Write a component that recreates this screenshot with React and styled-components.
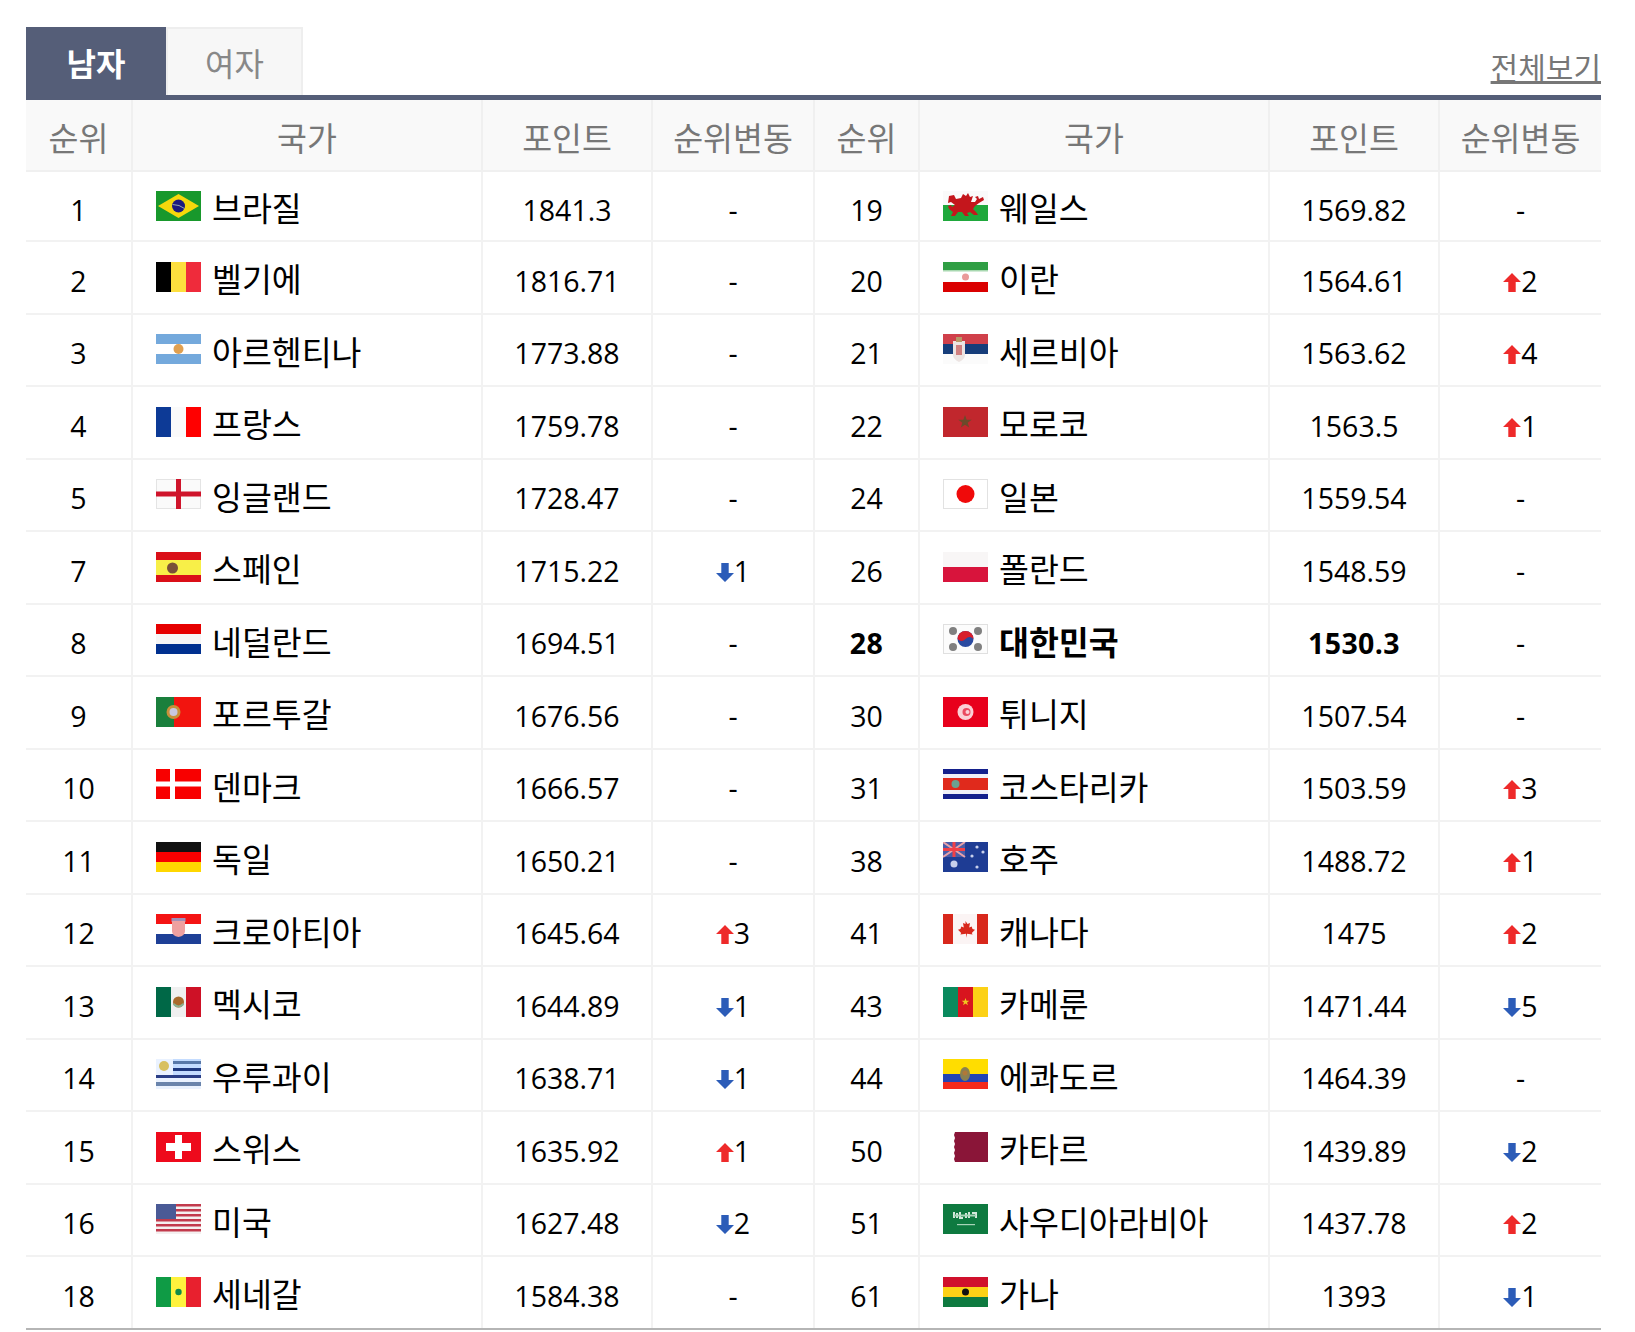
import React from 'react';
import styled, { createGlobalStyle } from 'styled-components';

const GlobalStyle = createGlobalStyle`
  html, body {
    margin: 0;
    padding: 0;
    background: #fff;
  }
  body {
    font-family: "Noto Sans CJK KR", "Noto Sans", sans-serif;
  }
`;

const COLUMNS = '107px 350px 170px 162px 105px 350px 170px 161px';

//styled-components
const Page = styled.div`
  width: 1575px;
  margin: 0 0 0 26px;
  padding-top: 27px;
`;

const TabBar = styled.div`
  display: flex;
  align-items: flex-end;
  height: 68px;
  border-bottom: 5px solid #555e78;
`;

const Tab = styled.div`
  box-sizing: border-box;
  width: ${(p) => (p.$active ? '140px' : '137px')};
  height: 68px;
  display: flex;
  align-items: center;
  justify-content: center;
  font-size: 32px;
  font-weight: ${(p) => (p.$active ? 700 : 400)};
  color: ${(p) => (p.$active ? '#fff' : '#888')};
  background: ${(p) => (p.$active ? '#555e78' : '#f7f7f7')};
  border: 2px solid ${(p) => (p.$active ? '#555e78' : '#eee')};
  border-bottom: 0;
`;

const AllLink = styled.a`
  margin-left: auto;
  font-size: 30px;
  line-height: 44px;
  margin-bottom: 7px;
  color: #777;
  text-decoration: underline;
  text-underline-offset: 2px;
`;

const HeadRow = styled.div`
  display: grid;
  grid-template-columns: ${COLUMNS};
  height: 72px;
  box-sizing: border-box;
  background: #f9f9f9;
  border-bottom: 2px solid #f0f0f0;
`;

const HeadCell = styled.div`
  display: flex;
  align-items: center;
  justify-content: center;
  font-size: 32.5px;
  padding-top: 3px;
  color: #777;
  border-right: ${(p) => (p.$last ? '0' : '2px solid #f0f0f0')};
`;

const Row = styled.div`
  display: grid;
  grid-template-columns: ${COLUMNS};
  height: ${(p) => (p.$first ? '70px' : '72.5px')};
  box-sizing: border-box;
  border-bottom: 2px solid ${(p) => (p.$last ? '#b5b5b5' : '#f2f2f2')};
`;

const Cell = styled.div`
  display: flex;
  align-items: center;
  justify-content: center;
  font-family: "Open Sans", "Noto Sans CJK KR", sans-serif;
  font-size: 28.5px;
  padding-top: 7px;
  color: #000;
  font-weight: ${(p) => (p.$bold ? 700 : 400)};
  letter-spacing: ${(p) => (p.$bold ? '0.4px' : '0')};
  border-right: ${(p) => (p.$last ? '0' : '2px solid #f2f2f2')};
`;

const NameCell = styled.div`
  display: flex;
  align-items: center;
  gap: 11px;
  padding: 2px 0 0 23px;
  border-right: 2px solid #f2f2f2;
`;

const Name = styled.span`
  font-size: 32.5px;
  line-height: 44px;
  color: #000;
  font-weight: ${(p) => (p.$bold ? 700 : 400)};
`;

const FlagSvg = styled.svg`
  width: 45px;
  height: 30px;
  flex: none;
  margin-top: -3px;
  filter: blur(0.5px);
`;

const ArrowSvg = styled.svg`
  width: 18px;
  height: 19px;
  flex: none;
  margin-top: 3px;
  fill: ${(p) => (p.$up ? '#ee2a2a' : '#2c5cb8')};
`;

// flag helpers
const H = ({ c, stops }) => {
  const h = 30 / c.length;
  return c.map((col, i) => {
    const y = stops ? stops[i] : i * h;
    const end = stops ? stops[i + 1] ?? 30 : (i + 1) * h;
    return <rect key={i} x="0" y={y} width="45" height={end - y} fill={col} />;
  });
};

const V = ({ c }) =>
  c.map((col, i) => <rect key={i} x={i * 15} y="0" width="15" height="30" fill={col} />);

const star = 'M0-5 1.2-1.6 4.8-1.6 1.9.6 3 4 0 2 -3 4 -1.9.6 -4.8-1.6 -1.2-1.6Z';

const FLAGS = {
  브라질: (
    <>
      <rect width="45" height="30" fill="#18982c" />
      <path d="M22.5 3 43 15 22.5 27 2 15Z" fill="#f6d80c" />
      <circle cx="22.5" cy="15" r="6.5" fill="#1c1a80" />
      <path d="M16.5 13.5q7 0 12 4" stroke="#9aa" strokeWidth="1" fill="none" />
    </>
  ),
  벨기에: <V c={['#000', '#fddf3e', '#ef2b3b']} />,
  아르헨티나: (
    <>
      <H c={['#74a9dc', '#fff', '#74a9dc']} />
      <circle cx="22.5" cy="15" r="5" fill="#e0a050" />
    </>
  ),
  프랑스: <V c={['#0d3a96', '#fafafa', '#ff0000']} />,
  잉글랜드: (
    <>
      <rect width="45" height="30" fill="#e4e4e4" />
      <rect x="1" y="1" width="43" height="28" fill="#fafafa" />
      <rect x="20" width="5" height="30" fill="#cf142b" />
      <rect y="12.5" width="45" height="5" fill="#cf142b" />
    </>
  ),
  스페인: (
    <>
      <H c={['#da0f18', '#f8ef48', '#da0f18']} stops={[0, 8, 23]} />
      <circle cx="16.5" cy="16" r="5.5" fill="#7a5038" />
    </>
  ),
  네덜란드: <H c={['#e60000', '#f6f6f6', '#00308f']} />,
  포르투갈: (
    <>
      <rect width="18" height="30" fill="#1a7f3c" />
      <rect x="18" width="27" height="30" fill="#f2140f" />
      <circle cx="17.5" cy="15" r="7" fill="#c8903a" />
      <circle cx="17.5" cy="15" r="4" fill="#c8c8e0" />
    </>
  ),
  덴마크: (
    <>
      <rect width="45" height="30" fill="#f80000" />
      <rect x="14" width="5" height="30" fill="#fff" />
      <rect y="12.5" width="45" height="5" fill="#fff" />
    </>
  ),
  독일: <H c={['#111', '#f80000', '#ffd700']} />,
  크로아티아: (
    <>
      <H c={['#f41414', '#fff', '#1e3f96']} />
      <rect x="15.5" y="4" width="14" height="4" fill="#a090b8" />
      <path d="M16 7h13v10q0 5-6.500 6-6.500-1-6.500-6Z" fill="#eea0a0" />
    </>
  ),
  멕시코: (
    <>
      <V c={['#006847', '#f0f0f0', '#ce1126']} />
      <circle cx="22.500" cy="15" r="5.500" fill="#a86a2c" />
      <path d="M17.500 17q5 5 10 0" stroke="#8ab090" strokeWidth="2" fill="none" />
    </>
  ),
  우루과이: (
    <>
      <rect width="45" height="30" fill="#eaf2ff" />
      <rect x="17" y="0" width="28" height="16" fill="#c4dcff" />
      <rect x="17" y="2" width="28" height="3" fill="#5878a8" />
      <rect x="17" y="9" width="28" height="3" fill="#203a80" />
      <rect y="16" width="45" height="3" fill="#2a3e86" />
      <rect y="23" width="45" height="4" fill="#6a84ac" />
      <circle cx="8" cy="7" r="5" fill="#d8c060" />
    </>
  ),
  스위스: (
    <>
      <rect width="45" height="30" fill="#ee0a1c" />
      <rect x="19" y="3" width="7" height="24" fill="#fff" />
      <rect x="10" y="11" width="25" height="8" fill="#fff" />
    </>
  ),
  미국: (
    <>
      <rect width="45" height="30" fill="#f4f0f0" />
      {[0, 5, 10, 15, 20, 25].map((y) => (
        <rect key={y} y={y} width="45" height="2.500" fill="#c23a4c" />
      ))}
      <rect width="20" height="15" fill="#4a5a96" />
    </>
  ),
  세네갈: (
    <>
      <V c={['#0f9b45', '#fff23d', '#e8202e']} />
      <circle cx="22.500" cy="15" r="3.200" fill="#108a48" />
    </>
  ),
  웨일스: (
    <>
      <rect width="45" height="14" fill="#fafafa" />
      <rect y="14" width="45" height="16" fill="#1fa83c" />
      <path
        d="M6 5l5-1 2 4 5-1 2-4 3 2 2-3 2 4 3-1-2 6 4 0 2-3-2-2 3-1 1 3 4-2 1 3-5 3-4 3-2 3 3 3 2 3-4 0-4-3-3 1 2 3-4 0-3-4-4 0-3 4-4 0 2-4-4-3-1-3 3-1 1 2 3-2-4-3-3 1Z"
        fill="#c4161c"
      />
    </>
  ),
  이란: (
    <>
      <H c={['#2f9e44', '#fff', '#da0000']} stops={[0, 8, 20]} />
      <rect y="8" width="45" height="1.500" fill="#a8d8b0" />
      <circle cx="22.500" cy="15" r="3.500" fill="#ea9a9a" />
    </>
  ),
  세르비아: (
    <>
      <H c={['#d0404a', '#163d7a', '#fbfbfb']} />
      <path d="M10 7h12v14q0 4-6 7-6-3-6-7Z" fill="#ece4e2" />
      <rect x="13" y="3" width="6" height="5" fill="#b89868" />
      <rect x="13" y="11" width="6" height="10" fill="#d08080" />
    </>
  ),
  모로코: (
    <>
      <rect width="45" height="30" fill="#c1272d" />
      <path d={star} transform="translate(22 15) scale(1.400)" fill="#6b4a2a" />
    </>
  ),
  일본: (
    <>
      <rect width="45" height="30" fill="#e2e2e2" />
      <rect x="1" y="1" width="43" height="28" fill="#fff" />
      <circle cx="22.500" cy="15" r="9" fill="#f00a0a" />
    </>
  ),
  폴란드: (
    <>
      <rect width="45" height="15" fill="#f8f6f6" />
      <rect y="15" width="45" height="15" fill="#d8143c" />
    </>
  ),
  대한민국: (
    <>
      <rect width="45" height="30" fill="#e0e0e0" />
      <rect x="1" y="1" width="43" height="28" fill="#fcfcfc" />
      <circle cx="22.500" cy="15" r="8" fill="#2a4aa0" />
      <path d="M14.500 15a8 8 0 0 1 16 0q-4-4-8 0t-8 0Z" fill="#d81e2c" />
      <g fill="#808080">
        <circle cx="10" cy="7" r="4" />
        <circle cx="35" cy="7" r="4" />
        <circle cx="10" cy="23" r="4" />
        <circle cx="35" cy="23" r="4" />
      </g>
    </>
  ),
  튀니지: (
    <>
      <rect width="45" height="30" fill="#e8001c" />
      <circle cx="22.500" cy="15" r="8" fill="#fbd0d6" />
      <circle cx="23.500" cy="15" r="4" fill="#ea4a60" />
      <circle cx="24.500" cy="15" r="2" fill="#fbd0d6" />
    </>
  ),
  코스타리카: (
    <>
      <H
        c={['#14208c', '#f0f0f8', '#e02a1c', '#f0f0f8', '#14208c']}
        stops={[0, 5, 9, 21, 25]}
      />
      <circle cx="12.500" cy="15" r="4" fill="#6aa090" />
    </>
  ),
  호주: (
    <>
      <rect width="45" height="30" fill="#1e3c94" />
      <rect width="22" height="15" fill="#4a5ca8" />
      <path d="M0 0 22 15M22 0 0 15" stroke="#e8a0a8" strokeWidth="2" />
      <path d="M11 0V15M0 7.500H22" stroke="#f04048" strokeWidth="3" />
      <g fill="#c8d0ec">
        <circle cx="11" cy="22" r="3.500" />
        <circle cx="34" cy="5" r="1.600" />
        <circle cx="40" cy="10" r="1.600" />
        <circle cx="29" cy="14" r="1.600" />
        <circle cx="34" cy="25" r="1.600" />
      </g>
    </>
  ),
  캐나다: (
    <>
      <rect width="45" height="30" fill="#fbf4f4" />
      <rect width="10" height="30" fill="#d8281c" />
      <rect x="34" width="11" height="30" fill="#d8281c" />
      <path
        d="M22.500 7l2 3 2.500-1-.8 4.500 2.500-1 .8 2.500 2.500.8-3.200 3.200.8 1.600-5.600-.8-.5 4-.5-4-5.600.8.8-1.600-3.200-3.200 2.500-.8.8-2.500 2.500 1-.8-4.500 2.500 1Z"
        fill="#d8281c"
      />
    </>
  ),
  카메룬: (
    <>
      <V c={['#0a8a5e', '#d8141e', '#fcd116']} />
      <path d={star} transform="translate(22.500 15) scale(.8)" fill="#f0c820" />
    </>
  ),
  에콰도르: (
    <>
      <H c={['#ffdd00', '#2244b4', '#f42a1c']} stops={[0, 15, 23]} />
      <ellipse cx="22" cy="15" rx="5" ry="7" fill="#8a8050" />
      <circle cx="22" cy="14" r="2.500" fill="#b07838" />
    </>
  ),
  카타르: (
    <>
      <rect width="45" height="30" fill="#fff" />
      <path d="M12 0H45V30H12l-1-3 1-3-1-3 1-3-1-3 1-3-1-3 1-3-1-3Z" fill="#8a1538" />
    </>
  ),
  사우디아라비아: (
    <>
      <rect width="45" height="30" fill="#0e7a40" />
      <path
        d="M11 8v6M14 9v5M17 8v6H20M23 9v5M26 8v6M29 9h4v5"
        stroke="#d4e8dc"
        strokeWidth="2"
        fill="none"
      />
      <rect x="11" y="10.500" width="22" height="2" fill="#a8d4b8" />
      <rect x="14" y="20" width="18" height="1.200" fill="#a8d4b8" />
    </>
  ),
  가나: (
    <>
      <H c={['#d0102c', '#fcd116', '#0e7a40']} />
      <circle cx="22.500" cy="15" r="3.500" fill="#111" />
    </>
  ),
};

const Flag = ({ name }) => (
  <FlagSvg viewBox="0 0 45 30" aria-hidden="true">
    {FLAGS[name]}
  </FlagSvg>
);

const Arrow = ({ up }) => (
  <ArrowSvg $up={up} viewBox="0 0 17 19" preserveAspectRatio="none" aria-hidden="true">
    <path d={up ? 'M8.500 0 17 9H12V19H5V9H0Z' : 'M8.500 19 17 10H12V0H5V10H0Z'} />
  </ArrowSvg>
);

// [rank, name, points, change]  change: 0 none, +n up, -n down
const ROWS = [
  [[1, '브라질', '1841.3', 0], [19, '웨일스', '1569.82', 0]],
  [[2, '벨기에', '1816.71', 0], [20, '이란', '1564.61', 2]],
  [[3, '아르헨티나', '1773.88', 0], [21, '세르비아', '1563.62', 4]],
  [[4, '프랑스', '1759.78', 0], [22, '모로코', '1563.5', 1]],
  [[5, '잉글랜드', '1728.47', 0], [24, '일본', '1559.54', 0]],
  [[7, '스페인', '1715.22', -1], [26, '폴란드', '1548.59', 0]],
  [[8, '네덜란드', '1694.51', 0], [28, '대한민국', '1530.3', 0]],
  [[9, '포르투갈', '1676.56', 0], [30, '튀니지', '1507.54', 0]],
  [[10, '덴마크', '1666.57', 0], [31, '코스타리카', '1503.59', 3]],
  [[11, '독일', '1650.21', 0], [38, '호주', '1488.72', 1]],
  [[12, '크로아티아', '1645.64', 3], [41, '캐나다', '1475', 2]],
  [[13, '멕시코', '1644.89', -1], [43, '카메룬', '1471.44', -5]],
  [[14, '우루과이', '1638.71', -1], [44, '에콰도르', '1464.39', 0]],
  [[15, '스위스', '1635.92', 1], [50, '카타르', '1439.89', -2]],
  [[16, '미국', '1627.48', -2], [51, '사우디아라비아', '1437.78', 2]],
  [[18, '세네갈', '1584.38', 0], [61, '가나', '1393', -1]],
];

const HEADERS = ['순위', '국가', '포인트', '순위변동', '순위', '국가', '포인트', '순위변동'];

const Team = ({ team, last }) => {
  const [rank, name, points, change] = team;
  const bold = name === '대한민국';
  return (
    <>
      <Cell $bold={bold}>{rank}</Cell>
      <NameCell>
        <Flag name={name} />
        <Name $bold={bold}>{name}</Name>
      </NameCell>
      <Cell $bold={bold}>{points}</Cell>
      <Cell $last={last}>
        {change === 0 ? '-' : <Arrow up={change > 0} />}
        {change !== 0 && Math.abs(change)}
      </Cell>
    </>
  );
};

const App = () => {
  return (
    <Page>
      <GlobalStyle />
      <TabBar>
        <Tab $active>남자</Tab>
        <Tab>여자</Tab>
        <AllLink href="#">전체보기</AllLink>
      </TabBar>
      <HeadRow>
        {HEADERS.map((h, i) => (
          <HeadCell key={i} $last={i === HEADERS.length - 1}>
            {h}
          </HeadCell>
        ))}
      </HeadRow>
      {ROWS.map((r, i) => (
        <Row key={i} $first={i === 0} $last={i === ROWS.length - 1}>
          <Team team={r[0]} />
          <Team team={r[1]} last />
        </Row>
      ))}
    </Page>
  );
};

export default App;
